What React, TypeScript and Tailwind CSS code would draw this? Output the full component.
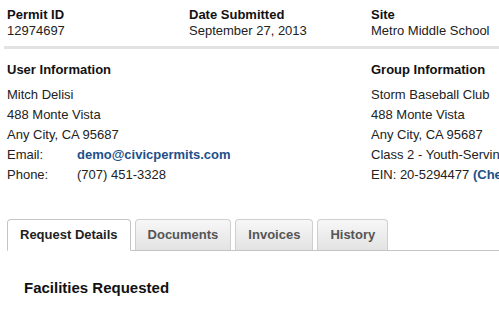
import React from "react";

const HEADER = [
  { label: "Permit ID", value: "12974697" },
  { label: "Date Submitted", value: "September 27, 2013" },
  { label: "Site", value: "Metro Middle School" },
];

const TABS = ["Request Details", "Documents", "Invoices", "History"];

const App = () => {
  return (
    <div
      className="w-[499px] h-[315px] overflow-hidden bg-white text-[13px] text-[#222] whitespace-nowrap"
      style={{ fontFamily: '"Liberation Sans", Arial, sans-serif' }}
    >
      {/* Permit header */}
      <div className="flex pt-[7px] pl-[7px] leading-[16px]">
        {HEADER.map(({ label, value }) => (
          <div key={label} className="w-[182px] shrink-0">
            <div className="font-bold text-[#111]">{label}</div>
            <div>{value}</div>
          </div>
        ))}
      </div>
      <div className="ml-[4px] mt-[7px] h-[3px] bg-[#e2e2e2]" />

      {/* User / group info */}
      <div className="flex pl-[7px] pt-[11px] leading-[20px]">
        <div className="w-[364px] shrink-0">
          <div className="font-bold text-[#111] mb-[5px]">User Information</div>
          <div>Mitch Delisi</div>
          <div>488 Monte Vista</div>
          <div>Any City, CA 95687</div>
          <div className="flex">
            <span className="w-[70px]">Email:</span>
            <span className="font-bold text-[#22508a]">demo@civicpermits.com</span>
          </div>
          <div className="flex">
            <span className="w-[70px]">Phone:</span>
            <span>(707) 451-3328</span>
          </div>
        </div>
        <div className="shrink-0">
          <div className="font-bold text-[#111] mb-[5px]">Group Information</div>
          <div>Storm Baseball Club</div>
          <div>488 Monte Vista</div>
          <div>Any City, CA 95687</div>
          <div>Class 2 - Youth-Serving Organization</div>
          <div>
            EIN: 20-5294477{" "}
            <span className="font-bold text-[#22508a]">(Check Status)</span>
          </div>
        </div>
      </div>

      {/* Tabs */}
      <div className="mt-[34px] ml-[7px] flex gap-[4px] border-b border-[#c4c4c4]">
        {TABS.map((tab, i) => (
          <div
            key={tab}
            className={
              i === 0
                ? "-mb-px rounded-t-[4px] border border-b-white border-[#c4c4c4] bg-white px-[12px] pt-[7px] pb-[7px] leading-[16px] font-bold text-[#222]"
                : "rounded-t-[4px] border border-b-0 border-[#cfcfcf] bg-gradient-to-b from-[#f7f7f7] to-[#e3e3e3] px-[12px] pt-[7px] pb-[7px] leading-[16px] font-bold text-[#555]"
            }
          >
            {tab}
          </div>
        ))}
      </div>

      <div className="pl-[24px] pt-[28px] text-[15px] leading-[18px] font-bold text-[#111]">
        Facilities Requested
      </div>
    </div>
  );
};

export default App;
